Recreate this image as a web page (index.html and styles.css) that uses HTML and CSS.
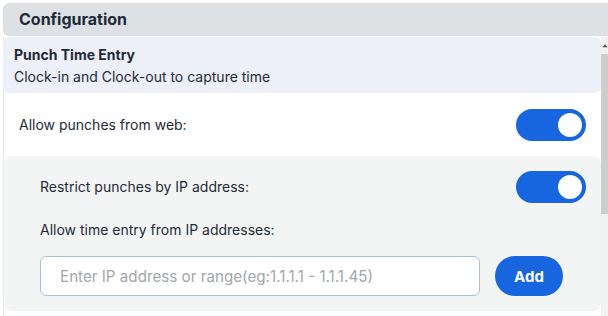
FILE: index.html
```html
<!DOCTYPE html>
<html>
<head>
<meta charset="utf-8">
<link rel="stylesheet" href="styles.css">
</head>
<body>
<div class="page">
  <div class="header">Configuration</div>
  <div class="scroll">
    <div class="panel">
      <div class="card">
        <div class="card-title">Punch Time Entry</div>
        <div class="card-sub">Clock-in and Clock-out to capture time</div>
      </div>
      <div class="row top-row">
        <span class="label">Allow punches from web:</span>
        <span class="toggle"><span class="knob"></span></span>
      </div>
      <div class="section">
        <div class="row">
          <span class="label">Restrict punches by IP address:</span>
          <span class="toggle"><span class="knob"></span></span>
        </div>
        <div class="label ip-label">Allow time entry from IP addresses:</div>
        <div class="ip-row">
          <input class="ip-input" type="text" placeholder="Enter IP address or range(eg:1.1.1.1 - 1.1.1.45)">
          <button class="add-btn">Add</button>
        </div>
      </div>
    </div>
    <div class="scrollbar">
      <div class="sb-arrow">
        <svg width="7" height="5" viewBox="0 0 7 5"><path d="M0.5 4.5 L3.5 1 L6.5 4.5 Z" fill="#505050"/></svg>
      </div>
      <div class="sb-thumb"></div>
    </div>
  </div>
</div>
</body>
</html>
```

FILE: styles.css
```css
* { box-sizing: border-box; }
html, body { margin: 0; padding: 0; background: #fff; overflow: hidden; }
body {
  font-family: Inter, "Noto Sans", sans-serif;
  color: #1e2a38;
  width: 608px;
  height: 316px;
}
.page {
  padding: 3px 0 0 3px;
  height: 316px;
  display: flex;
  flex-direction: column;
}
.header {
  height: 33px;
  background: #dde1e4;
  border-radius: 6px 0 0 6px;
  font-size: 16px;
  font-weight: 700;
  line-height: 33px;
  padding-left: 16px;
  color: #1c2a3a;
}
.scroll {
  flex: 1;
  display: flex;
  margin-top: 1px;
  overflow: hidden;
}
.panel {
  flex: 1;
  border-left: 1px solid #e6e8ea;
}
.card {
  background: #edf0f8;
  border-radius: 6px;
  margin-left: -1px;
  padding: 8px 10px 6px 11px;
  height: 56px;
}
.card-title {
  font-size: 14px;
  font-weight: 700;
  line-height: 20px;
}
.card-sub {
  font-size: 14px;
  line-height: 20px;
  margin-top: 2px;
}
.row {
  display: flex;
  align-items: center;
  justify-content: space-between;
}
.top-row {
  padding: 16px 15px 15px 15px;
}
.label {
  font-size: 14px;
  line-height: 20px;
  color: #1e2a38;
}
.toggle {
  width: 70px;
  height: 32px;
  border-radius: 16px;
  background: #1766df;
  display: flex;
  align-items: center;
  justify-content: flex-end;
  padding-right: 4px;
}
.knob {
  width: 24px;
  height: 24px;
  border-radius: 50%;
  background: #fff;
}
.section {
  background: #f3f5f5;
  border-radius: 8px;
  padding: 15px 15px 15px 36px;
}
.ip-label {
  margin-top: 17px;
}
.ip-row {
  display: flex;
  align-items: center;
  gap: 15px;
  margin-top: 16px;
}
.ip-input {
  width: 440px;
  height: 40px;
  border: 1px solid #a9c2d9;
  border-radius: 6px;
  background: #fff;
  padding: 0 0 0 19px;
  font-family: Inter, "Noto Sans", sans-serif;
  font-size: 15.2px;
  color: #1e2a38;
  outline: none;
}
.ip-input::placeholder { color: #a3a7ab; }
.add-btn {
  width: 68px;
  height: 40px;
  border: none;
  border-radius: 20px;
  background: #1766df;
  color: #fff;
  font-family: Inter, "Noto Sans", sans-serif;
  font-size: 15px;
  font-weight: 700;
  padding: 0;
}
.scrollbar {
  width: 7px;
  background: #f1f1f1;
  display: flex;
  flex-direction: column;
}
.sb-arrow {
  height: 17px;
  display: flex;
  align-items: center;
  justify-content: flex-start;
  padding-left: 1px;
}
.sb-thumb {
  height: 160px;
  background: #cdcdcd;
}
```
